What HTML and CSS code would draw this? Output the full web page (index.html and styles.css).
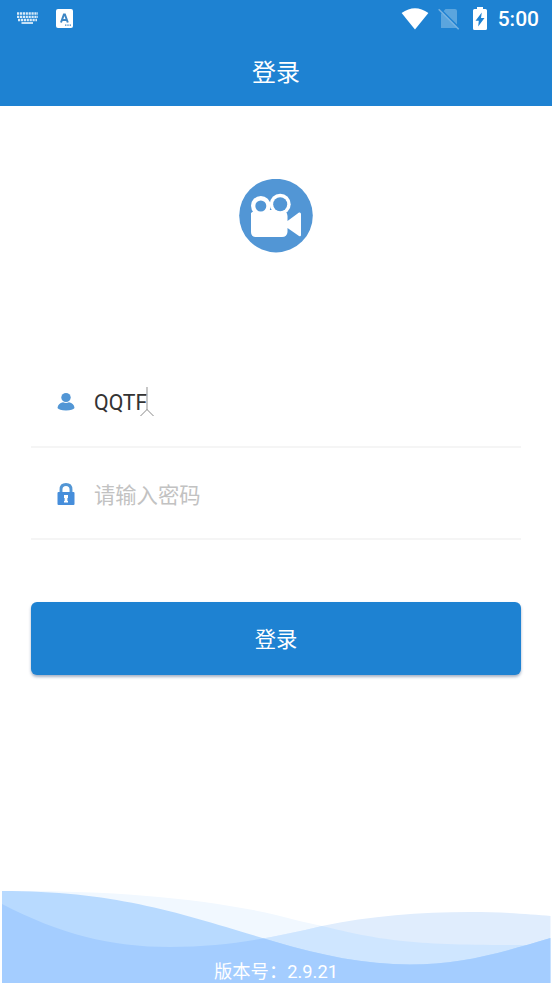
FILE: index.html
```html
<!DOCTYPE html>
<html lang="zh-CN">
<head>
<meta charset="utf-8">
<title>登录</title>
<link rel="stylesheet" href="styles.css">
</head>
<body>
<div class="screen">
  <header class="header">
    <div class="status">
      <svg class="keyboard" width="21" height="13" viewBox="0 0 21 13">
        <path d="M0 1.5H21M0 4.8H21M1 8H20" stroke="#d9ebf9" stroke-width="2.3" stroke-dasharray="2.2 .7"/>
        <path d="M4.5 11H16" stroke="#d9ebf9" stroke-width="1.8"/>
      </svg>
      <svg class="ime" width="17" height="19" viewBox="0 0 17 19">
        <rect width="17" height="19" rx="2" fill="#fff"/>
        <path d="M5 13.5L7.900 5.500H8.900L11.800 13.500M6.200 10.900H10.600" fill="none" stroke="#3d86c4" stroke-width="2"/>
        <path d="M9 16.2H15.5" stroke="#3d86c4" stroke-width="1.3" stroke-dasharray="1.4 .9"/>
      </svg>
      <svg class="wifi" width="28" height="22" viewBox="0 0 28 22">
        <path d="M.6 5Q14-4.4 27.4 5L14 21.6Z" fill="#fff"/>
      </svg>
      <svg class="nosim" width="22" height="22" viewBox="0 0 22 22">
        <path d="M7.5 1H17Q19 1 19 3V20H3V6Z" fill="#5ba5de"/>
        <path d="M1.8.5L22 20.7" stroke="#1e82d2" stroke-width="1.6"/>
        <path d="M.7 1.2L20.7 21.2" stroke="#76b2e1" stroke-width="1.6"/>
      </svg>
      <svg class="battery" width="14" height="23" viewBox="0 0 14 23">
        <path d="M4 0H10V2H12.5Q14 2 14 3.5V21.5Q14 23 12.5 23H1.5Q0 23 0 21.5V3.5Q0 2 1.5 2H4Z" fill="#fff"/>
        <path d="M8.8 5.5L2.5 13.8H5.8L5.2 19.5L11.5 11H8Z" fill="#1e82d2"/>
      </svg>
      <span class="clock">5:00</span>
    </div>
    <h1 class="title">登录</h1>
  </header>

  <main class="content">
    <svg class="logo" width="74" height="74" viewBox="0 0 74 74">
      <circle cx="37" cy="36.6" r="36.8" fill="#5296d5"/>
      <g fill="#fff">
        <circle cx="21.8" cy="26.8" r="9.8"/>
        <circle cx="41.2" cy="25.2" r="10.5"/>
        <path d="M16 31H44Q48 32 48.5 37V42L60 33.5Q62 33 62 35V56Q62 58 60 57L48.5 49V53Q48 58 43 58H17Q12 58 12 53V34Z"/>
      </g>
      <circle cx="21.8" cy="27" r="5.5" fill="#5296d5"/>
      <circle cx="41.2" cy="25.2" r="7" fill="#5296d5"/>
    </svg>

    <div class="form">
      <div class="field">
        <svg class="icon" width="18" height="18" viewBox="0 0 18 18" fill="#5296d5">
          <ellipse cx="9" cy="4.5" rx="4.7" ry="4.5"/>
          <path d="M.5 15Q1 10.3 6 9.3Q9 10.6 12 9.3Q17 10.3 17.5 15Q16 17.4 9 17.4Q2 17.4 .5 15Z"/>
        </svg>
        <span class="value">QQTF</span>
        <svg class="caret" width="14" height="30" viewBox="0 0 14 30">
          <path d="M7 0V23" stroke="#aaa" stroke-width="1.3"/>
          <path d="M.5 29L7 22.5L13.5 29" fill="none" stroke="#888" stroke-width="1"/>
        </svg>
      </div>
      <div class="field">
        <svg class="icon" width="18" height="22" viewBox="0 0 18 22">
          <path d="M4 10V6.5Q4 1.5 9 1.5Q14 1.5 14 6.5V10" fill="none" stroke="#5296d5" stroke-width="2.9"/>
          <rect x=".5" y="9" width="17" height="13" rx="1" fill="#468edb"/>
          <path d="M7 12H11V15H10.4V18H11V19.5H7V18H7.6V15H7Z" fill="#fff"/>
        </svg>
        <span class="placeholder">请输入密码</span>
      </div>
      <button class="submit" type="button">登录</button>
    </div>
  </main>

  <footer class="footer">
    <svg class="waves" width="552" height="103" viewBox="0 0 552 103">
      <defs>
        <clipPath id="swell">
          <path d="M2 24C60 54 110 67 170 67C230 67 275 57 322 46C370 36 420 32 470 32C500 32 530 34 550.5 36V103H2Z"/>
        </clipPath>
      </defs>
      <path d="M2 11C100 10 200 17 276 35C292 39 307 43 322 46C380 60 410 65 510 65H550V103H2Z" fill="#f1f8ff"/>
      <g clip-path="url(#swell)">
        <rect width="552" height="103" fill="#e0edfd"/>
        <path d="M2 11C100 10 200 17 276 35C292 39 307 43 322 46C380 60 410 65 510 65H550V103H2Z" fill="#cfe6ff"/>
      </g>
      <path d="M2 11C120 11 185 35 276 62C320 75 365 84.5 410 84.5C460 84.5 500 73 550.5 58V103H2Z" fill="#b8daff"/>
      <path clip-path="url(#swell)" d="M2 11C120 11 185 35 276 62C320 75 365 84.5 410 84.5C460 84.5 500 73 550.5 58V103H2Z" fill="#a4cdff"/>
    </svg>
    <span class="version">版本号：2.9.21</span>
  </footer>
</div>
</body>
</html>
```
FILE: styles.css
```css
* { box-sizing: border-box; }

body {
  margin: 0;
  background: #fff;
  font-family: Roboto, "Noto Sans CJK SC", sans-serif;
}

svg { display: block; flex: none; }

.screen {
  display: flex;
  flex-direction: column;
  width: 552px;
  height: 983px;
  overflow: hidden;
}

.header {
  height: 106px;
  background: #1e82d2;
  color: #fff;
}

.status {
  display: flex;
  align-items: center;
  height: 37px;
  padding: 0 13px 0 17px;
}

.ime { margin-left: 18px; }
.wifi { margin-left: auto; }
.nosim { margin-left: 9px; }
.battery { margin-left: 13px; }

.clock {
  margin-left: 11px;
  padding-top: 1px;
  font-size: 21px;
  font-weight: 500;
  line-height: 24px;
}

.title {
  margin: 0;
  padding-top: 2px;
  font-size: 24px;
  font-weight: 400;
  line-height: 69px;
  text-align: center;
}

.content {
  flex: 1;
  display: flex;
  flex-direction: column;
  align-items: center;
  padding: 73px 31px 0;
}

.form {
  width: 100%;
  margin-top: 103px;
}

.field {
  display: flex;
  align-items: center;
  height: 92px;
  padding: 2px 26px 0;
  border-bottom: 2px solid #f5f5f5;
  font-size: 21.3px;
}

.value {
  margin-left: 19px;
  color: #333;
}

.placeholder {
  margin-left: 19px;
  padding-bottom: 2px;
  color: #c2c2c2;
}

.caret { margin-left: -7px; }

.submit {
  display: block;
  width: 100%;
  height: 73px;
  margin-top: 62px;
  padding: 0 0 2px;
  border: 0;
  border-radius: 6px;
  background: #1e82d2;
  box-shadow: 0 2px 3px rgba(30, 60, 110, .4);
  color: #fff;
  font-family: inherit;
  font-size: 21.3px;
}

.footer {
  display: grid;
  height: 103px;
}

.waves, .version { grid-area: 1 / 1; }

.version {
  z-index: 1;
  align-self: end;
  justify-self: center;
  margin-bottom: -1px;
  color: #fff;
  font-size: 18.3px;
  line-height: 24px;
}
```
